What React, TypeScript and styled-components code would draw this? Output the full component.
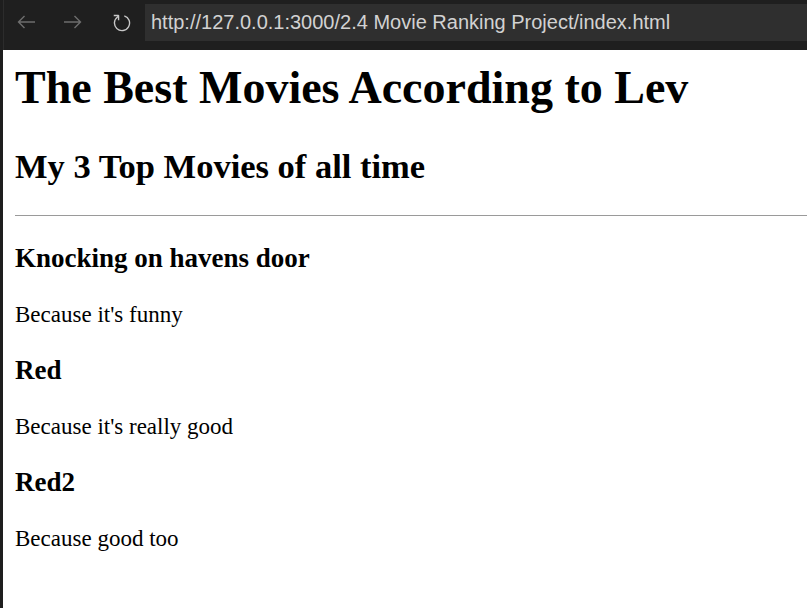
import React from "react";
import styled, { createGlobalStyle } from "styled-components";

const Global = createGlobalStyle`
  html, body { margin: 0; padding: 0; background: #ffffff; }
  body { width: 807px; height: 608px; overflow: hidden; }
`;

const Shell = styled.div`
  display: flex;
  flex-direction: column;
  width: 807px;
  height: 608px;
  background: #1e1e1e;
`;

const Toolbar = styled.div`
  display: flex;
  align-items: flex-start;
  height: 50px;
  background: #1f1f1f;
  border-left: 1px solid #2c2c2c;
  margin-left: 3px;
  box-sizing: border-box;
`;

const NavButton = styled.div<{ $bright?: boolean; $ml: number; $mt: number }>`
  display: flex;
  margin-left: ${(p) => p.$ml}px;
  margin-top: ${(p) => p.$mt}px;
  color: ${(p) => (p.$bright ? "#c8c8c8" : "#6e6e6e")};
`;

const UrlBar = styled.div`
  flex: 1;
  display: flex;
  align-items: center;
  height: 37px;
  margin-top: 4px;
  margin-left: 12px;
  padding-left: 6px;
  background: #2f2f2f;
  color: #d2d2d2;
  font-family: "Liberation Sans", Arial, sans-serif;
  font-size: 20px;
`;

const Viewport = styled.div`
  flex: 1;
  display: flex;
`;

const Gutter = styled.div`
  width: 3px;
  background: #1e1e1e;
`;

const Page = styled.main`
  flex: 1;
  background: #ffffff;
  padding: 0 0 0 12px;
  font-family: "Liberation Serif", "Times New Roman", serif;
  color: #000;
`;

const Title = styled.h1`
  margin: 12px 0 0;
  font-size: 46px;
  line-height: 52px;
  font-weight: bold;
`;

const Subtitle = styled.h2`
  margin: 32px 0 0;
  font-size: 34.5px;
  line-height: 40px;
  font-weight: bold;
`;

const Rule = styled.hr`
  margin: 29px 0 0;
  border: none;
  border-top: 1px solid #9a9a9a;
  height: 0;
`;

const MovieTitle = styled.h3`
  margin: 27px 0 0;
  font-size: 27px;
  line-height: 31px;
  font-weight: bold;
`;

const Reason = styled.p`
  margin: 27px 0 0;
  font-size: 23px;
  line-height: 27px;
`;

const ArrowLeft = () => (
  <svg width="19" height="14" viewBox="0 0 19 14" fill="none" stroke="currentColor" strokeWidth="1.4">
    <path d="M18 7H1.5M7.5 1L1.5 7l6 6" />
  </svg>
);

const ArrowRight = () => (
  <svg width="19" height="14" viewBox="0 0 19 14" fill="none" stroke="currentColor" strokeWidth="1.4">
    <path d="M1 7h16.5M11.5 1l6 6-6 6" />
  </svg>
);

const Reload = () => (
  <svg width="22" height="22" viewBox="0 0 16 16" fill="currentColor">
    <path d="M4.681 3H2V2h3.5l.5.5V6H5V4a5 5 0 1 0 4.53-.761l.302-.954A6 6 0 1 1 4.681 3z" />
  </svg>
);

const movies = [
  { title: "Knocking on havens door", reason: "Because it's funny" },
  { title: "Red", reason: "Because it's really good" },
  { title: "Red2", reason: "Because good too" },
];

export default function App() {
  return (
    <>
      <Global />
      <Shell>
        <Toolbar>
          <NavButton $ml={13} $mt={15}>
            <ArrowLeft />
          </NavButton>
          <NavButton $ml={27} $mt={15}>
            <ArrowRight />
          </NavButton>
          <NavButton $bright $ml={29} $mt={12}>
            <Reload />
          </NavButton>
          <UrlBar>http://127.0.0.1:3000/2.4 Movie Ranking Project/index.html</UrlBar>
        </Toolbar>
        <Viewport>
          <Gutter />
          <Page>
            <Title>The Best Movies According to Lev</Title>
            <Subtitle>My 3 Top Movies of all time</Subtitle>
            <Rule />
            {movies.map((m) => (
              <React.Fragment key={m.title}>
                <MovieTitle>{m.title}</MovieTitle>
                <Reason>{m.reason}</Reason>
              </React.Fragment>
            ))}
          </Page>
        </Viewport>
      </Shell>
    </>
  );
}
